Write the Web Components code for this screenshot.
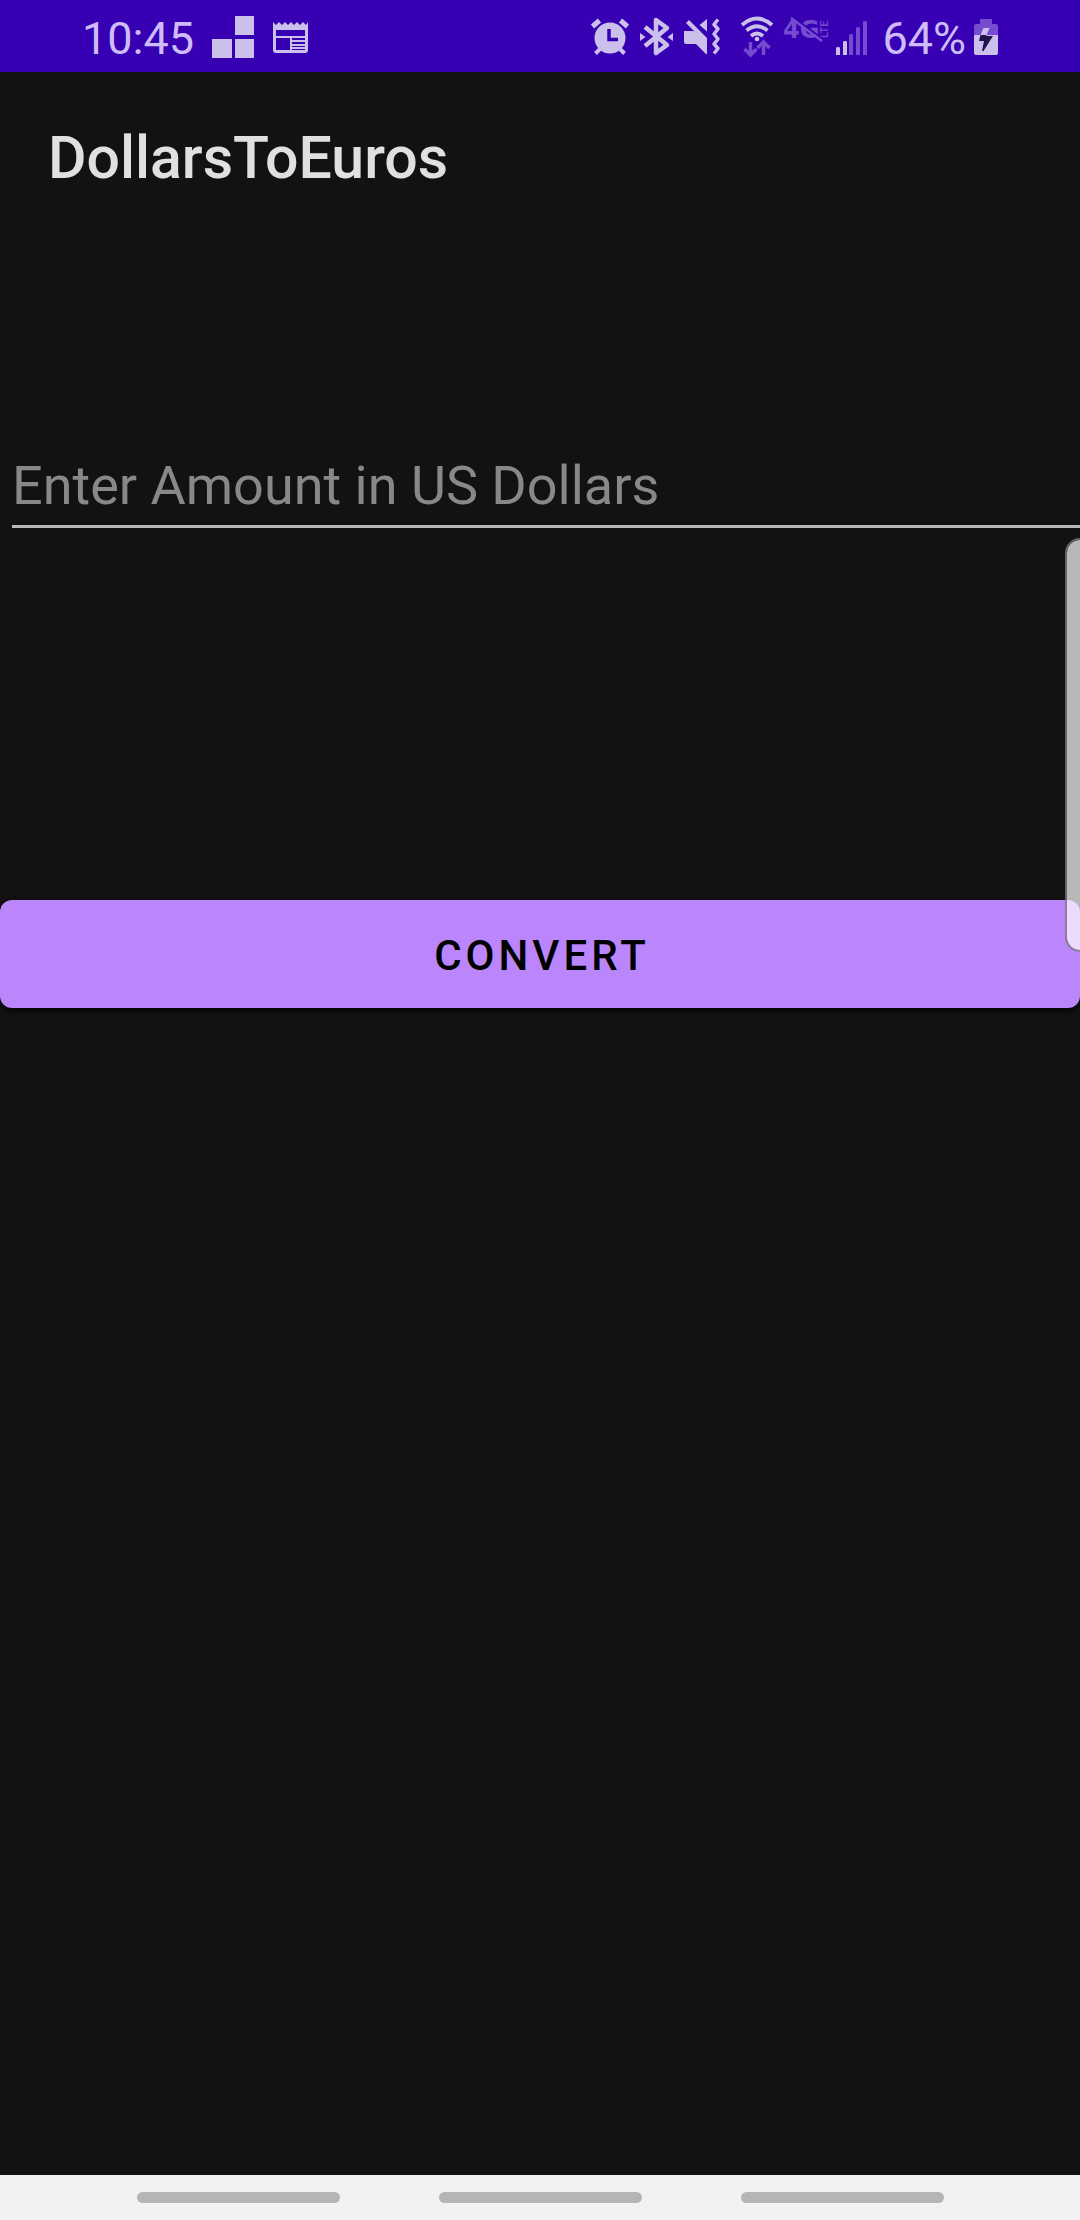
<!DOCTYPE html>
<html lang="en">
<head>
<meta charset="utf-8">
<meta name="viewport" content="width=device-width, initial-scale=1">
<title>DollarsToEuros</title>
<style>
  html, body { margin: 0; background: #121212; }
  body { font-family: Roboto, "Liberation Sans", sans-serif; }
</style>
</head>
<body>
<converter-screen>
  <status-bar slot="status" time="10:45" battery="64%"></status-bar>
  <app-bar slot="header">DollarsToEuros</app-bar>
  <amount-field placeholder="Enter Amount in US Dollars"></amount-field>
  <action-button>CONVERT</action-button>
  <edge-handle slot="overlay"></edge-handle>
  <navigation-hints slot="footer"></navigation-hints>
</converter-screen>
<script>
class BaseElement extends HTMLElement {
  constructor() {
    super();
    this.attachShadow({ mode: 'open' });
  }
  connectedCallback() {
    this.shadowRoot.innerHTML = this.render();
  }
}

customElements.define('converter-screen', class extends BaseElement {
  render() {
    return `<style>
      :host { display: flex; flex-direction: column; min-height: 100vh; position: relative; overflow: hidden; background: #121212; }
      main { flex: 1; display: flex; flex-direction: column; gap: 372px; padding-top: 206px; }
    </style>
    <slot name="status"></slot>
    <slot name="header"></slot>
    <main><slot></slot></main>
    <slot name="overlay"></slot>
    <slot name="footer"></slot>`;
  }
});

customElements.define('status-bar', class extends BaseElement {
  render() {
    return `<style>
      :host { display: flex; justify-content: space-between; height: 72px; padding: 0 82px; background: #3700b3; color: #cdbcf8; font-size: 45px; line-height: 78px; --on: #cbbfeb; --dim: #754ccf; }
      div { display: flex; }
      .left { gap: 18px; }
      .right { gap: 14px; }
      .modes { gap: 10px; }
      .radios { gap: 8px; padding-left: 6px; }
      .power { gap: 8px; }
      svg { display: block; height: 72px; flex: none; overflow: visible; fill: var(--on); }
      .dim { fill: var(--dim); }
      .line { fill: none; stroke: var(--on); }
      .dimline { fill: none; stroke: var(--dim); }
      .cut { fill: none; stroke: #3700b3; }
    </style>
    <div class="left">
      <span>${this.getAttribute('time')}</span>
      <svg width="42" viewBox="212 0 42 72" aria-hidden="true"><path d="M235 16h19v19h-19zM212 39h20v19h-20zM235 39h19v19h-19z"/></svg>
      <svg width="36" viewBox="272 0 36 72" aria-hidden="true">
        <path fill-rule="evenodd" d="M273 22l3 3 3-3 3 3 3-3 3 3 3-3 3 3 3-3 3 3 3-3 3 3 2-3v28q0 3-3 3h-29q-3 0-3-3zM276 30v6h29v-6zM276 38v12h14V38zM292 38v2h13v-2zM292 42v2h13v-2zM292 46v1h13v-1zM292 49v1h13v-1z"/>
      </svg>
    </div>
    <div class="right">
      <div class="modes">
        <svg width="39" viewBox="591 0 39 72" aria-hidden="true">
          <circle cx="610" cy="38" r="15.5"/>
          <path class="line" stroke-width="5" d="M592.5 26.500l7-6M620.500 20.500l7 6"/>
          <path class="line" stroke-width="4" d="M600 49l-4.500 4.500M620 49l4.500 4.500"/>
          <path class="cut" stroke-width="3.500" d="M609 29v10.500h9"/>
        </svg>
        <svg width="34" viewBox="640 0 34 72" aria-hidden="true">
          <path class="line" stroke-width="4.500" stroke-linejoin="round" d="M645 27l22 18-11 8V20l11 8-22 18"/>
          <path d="M640 33l5.500 4-5.500 4zM673 33l-5.500 4 5.500 4z"/>
        </svg>
        <svg width="36" viewBox="684 0 36 72" aria-hidden="true">
          <path d="M684 31h8.500l2 .5-8.500-8.500 3-3 18 18v16h-1l-10-10h-10q-2 0-2-2zM707 19v12.500l-7.500-6.500z"/>
          <path class="line" stroke-width="3.500" stroke-linejoin="round" d="M718 19.500l-4 5 4 4.500-4 5 4 5-4 5 4 4.500-4 5"/>
        </svg>
      </div>
      <div class="radios">
        <svg width="35" viewBox="740 0 35 72" aria-hidden="true">
          <path class="line" stroke-width="3.800" d="M742 25q15-13 30 0M746.500 30.500q10.500-8.500 21 0M751 36q6-5 12 0"/>
          <circle cx="757" cy="39" r="2.300"/>
          <path class="dimline" stroke-width="3.500" d="M750.500 42v13M744.500 49l6 6 6-6M763.500 55V42M757.500 48l6-6 6 6"/>
        </svg>
        <svg width="44" viewBox="783 0 44 72">
          <text class="dim" x="783" y="38" font-family="DejaVu Sans" font-weight="700" font-size="24">4G</text>
          <text class="dim" transform="translate(828 38) rotate(-90)" font-weight="500" font-size="11">LTE</text>
          <path class="cut" stroke-width="2" d="M793 17l31 23"/>
          <path class="dimline" stroke-width="2.500" d="M791 18l31 23"/>
        </svg>
        <svg width="33" viewBox="835 0 33 72" aria-hidden="true">
          <path d="M836 48q0-1 2-1t2 1v7h-4zM843 42q0-1 2-1t2 1v13h-4z"/>
          <path class="dim" d="M849 35q0-1 2-1t2 1v20h-4zM856 28q0-1 2-1t2 1v27h-4zM863 22q0-1 2-1t2 1v33h-4z"/>
        </svg>
      </div>
      <div class="power">
        <span>${this.getAttribute('battery')}</span>
        <svg width="24" viewBox="974 0 24 72" aria-hidden="true">
          <path class="dim" d="M980 19h12v5h4q2 0 2 2v9h-24v-9q0-2 2-2h4z"/>
          <path d="M974 35h24v18q0 2-2 2h-20q-2 0-2-2z"/>
          <path d="M983.500 28h6l-3 7h-6z"/>
          <path fill="#21134d" d="M980.500 35h6l-.500 1h7l-9.500 15h-1.500l2-10h-5z"/>
        </svg>
      </div>
    </div>`;
  }
});

customElements.define('app-bar', class extends BaseElement {
  render() {
    return `<style>
      :host { display: block; }
      header { display: flex; align-items: center; box-sizing: border-box; height: 168px; padding: 4px 48px 0; }
      h1 { margin: 0; font-size: 59px; line-height: 72px; font-weight: 500; color: #e0e0e0; }
    </style>
    <header><h1><slot></slot></h1></header>`;
  }
});

customElements.define('amount-field', class extends BaseElement {
  render() {
    const hint = this.getAttribute('placeholder');
    return `<style>
      :host { display: block; padding-left: 12px; }
      input { display: block; box-sizing: border-box; width: 100%; height: 82px; margin: 0; padding: 0 0 1px; border: 0; border-bottom: 3px solid #b8b8b8; border-radius: 0; outline: 0; background: none; color: #fff; font: 400 54px/64px Roboto, "Liberation Sans", sans-serif; }
      input::placeholder { color: #888; opacity: 1; }
    </style>
    <input type="text" inputmode="decimal" aria-label="${hint}" placeholder="${hint}">`;
  }
});

customElements.define('action-button', class extends BaseElement {
  render() {
    return `<style>
      :host { display: block; }
      button { display: block; box-sizing: border-box; width: 100%; height: 108px; margin: 0; padding: 4px 0 0 4px; border: 0; border-radius: 12px; background: #bb86fc; color: #000; box-shadow: 0 2px 6px #000; font: 500 42px/48px Roboto, "Liberation Sans", sans-serif; letter-spacing: 4px; }
    </style>
    <button type="button"><slot></slot></button>`;
  }
});

customElements.define('edge-handle', class extends BaseElement {
  render() {
    return `<style>
      :host { position: absolute; box-sizing: border-box; top: 538px; right: 0; width: 15px; height: 414px; border: 2px solid rgba(128, 120, 128, .8); border-right: 0; border-radius: 16px 0 0 16px; background: rgba(255, 255, 255, .7); background-clip: padding-box; }
    </style>`;
  }
});

customElements.define('navigation-hints', class extends BaseElement {
  render() {
    return `<style>
      :host { display: block; }
      nav { display: flex; justify-content: center; align-items: center; gap: 99px; height: 45px; background: #f2f2f2; }
      button { width: 203px; height: 11px; padding: 0; border: 0; border-radius: 6px; background: #b5b5b5; }
    </style>
    <nav aria-label="System navigation">
      <button type="button" aria-label="Recent apps"></button>
      <button type="button" aria-label="Home"></button>
      <button type="button" aria-label="Back"></button>
    </nav>`;
  }
});
</script>
</body>
</html>
